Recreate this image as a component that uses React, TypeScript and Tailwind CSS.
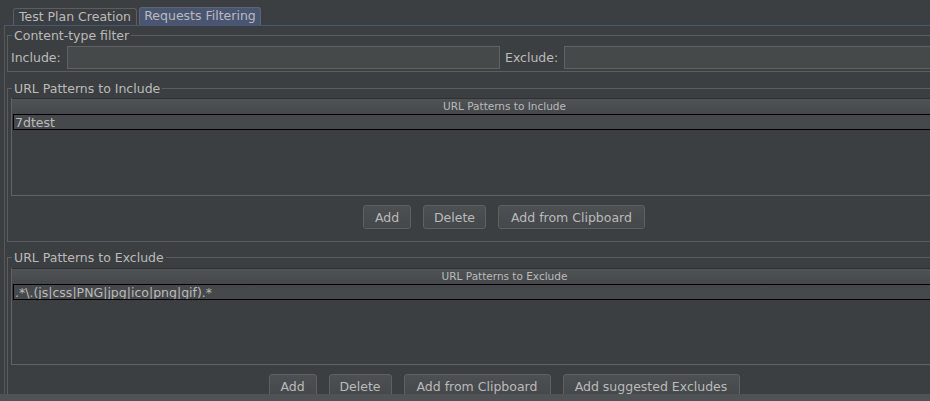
import React from 'react';

const font = "font-['DejaVu_Sans',_'Liberation_Sans',_sans-serif]";

function Button({ label, width }: { label: string; width: string }) {
  return (
    <button
      className={`${width} h-[24px] flex items-center justify-center rounded-[3px] border border-[#5e6163] bg-linear-to-b from-[#4c5052] to-[#44484a] text-[#bbbbbb] text-[12.5px] leading-[15px] whitespace-nowrap`}
    >
      {label}
    </button>
  );
}

function PatternTable({
  title,
  value,
  height,
}: {
  title: string;
  value: string;
  height: string;
}) {
  return (
    <div className={`${height} mx-[3px] border-l border-b border-[#606365]`}>
      <div className="h-[16px] border-t border-[#2e3032] bg-linear-to-b from-[#505356] to-[#45484a] text-center text-[10.5px] leading-[15px] text-[#bbbbbb]">
        {title}
      </div>
      <div className="ml-[1px] h-[16px] overflow-hidden border border-black bg-[#46494b]">
        <div className="pt-[1px] pl-[1px] leading-[14px] whitespace-nowrap">
          {value}
        </div>
      </div>
    </div>
  );
}

export default function App() {
  return (
    <div
      className={`w-[930px] h-[401px] overflow-hidden bg-[#3c3f41] text-[#bbbbbb] text-[12.5px] ${font} flex flex-col`}
    >
      <div className="h-[394px] overflow-hidden flex flex-col">
        {/* tabs */}
        <div className="h-[25px] flex items-end pl-[13px] gap-[2px] shrink-0">
          <div className="w-[124px] h-[17px] border border-b-0 border-[#5b5e60] rounded-t-[3px] text-center leading-[15px] whitespace-nowrap">
            Test Plan Creation
          </div>
          <div className="w-[122px] h-[18px] border border-b-0 border-[#5f6570] rounded-t-[3px] bg-[#4a5572] text-center leading-[15px] whitespace-nowrap">
            Requests Filtering
          </div>
        </div>

        <div className="ml-[4px] flex-1 border-l border-t border-l-[#56595b] border-t-[#475679] pl-[2px] pt-[2px]">
          {/* content-type filter */}
          <fieldset className="w-[994px] border border-[#5c5f61] p-0">
            <legend className="ml-[4px] px-[2px] leading-[15px]">
              Content-type filter
            </legend>
            <div className="flex items-center pl-[3px] pt-[3px] pb-[2px]">
              <label className="w-[56px] leading-[15px]">Include:</label>
              <div className="w-[433px] h-[23px] border border-[#606263] bg-[#45494a]" />
              <label className="ml-[5px] w-[59px] leading-[15px]">Exclude:</label>
              <div className="w-[433px] h-[23px] border border-[#606263] bg-[#45494a]" />
            </div>
          </fieldset>

          {/* include patterns */}
          <fieldset className="mt-[9px] w-[994px] border border-[#5c5f61] p-0">
            <legend className="ml-[4px] px-[2px] leading-[15px]">
              URL Patterns to Include
            </legend>
            <div className="mt-[2px]">
              <PatternTable
                title="URL Patterns to Include"
                value="7dtest"
                height="h-[98px]"
              />
            </div>
            <div className="mt-[9px] pb-[12px] flex justify-center gap-[12px]">
              <Button label="Add" width="w-[48px]" />
              <Button label="Delete" width="w-[63px]" />
              <Button label="Add from Clipboard" width="w-[147px]" />
            </div>
          </fieldset>

          {/* exclude patterns */}
          <fieldset className="mt-[8px] w-[994px] border border-[#5c5f61] p-0">
            <legend className="ml-[4px] px-[2px] leading-[15px]">
              URL Patterns to Exclude
            </legend>
            <div className="mt-[3px]">
              <PatternTable
                title="URL Patterns to Exclude"
                value={'.*\\.(js|css|PNG|jpg|ico|png|gif).*'}
                height="h-[97px]"
              />
            </div>
            <div className="mt-[9px] pb-[12px] flex justify-center gap-[12px]">
              <Button label="Add" width="w-[48px]" />
              <Button label="Delete" width="w-[63px]" />
              <Button label="Add from Clipboard" width="w-[147px]" />
              <Button label="Add suggested Excludes" width="w-[177px]" />
            </div>
          </fieldset>
        </div>
      </div>
      <div className="h-[7px] bg-[#505355] shrink-0" />
    </div>
  );
}
